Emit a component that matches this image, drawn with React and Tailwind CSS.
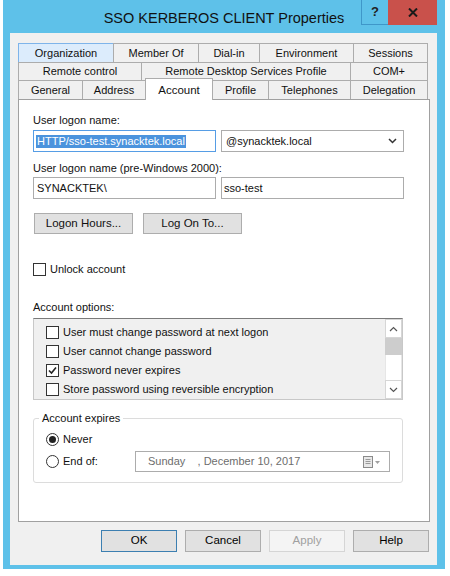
import React from "react";

const rows = [
  [
    { label: "Organization", w: "w-[95px]", hover: true },
    { label: "Member Of", w: "w-[85px]" },
    { label: "Dial-in", w: "w-[61px]" },
    { label: "Environment", w: "w-[94px]" },
    { label: "Sessions", w: "w-[75px]" },
  ],
  [
    { label: "Remote control", w: "w-[123px]" },
    { label: "Remote Desktop Services Profile", w: "w-[209px]" },
    { label: "COM+", w: "w-[78px]" },
  ],
];

const bottomRow = [
  { label: "General", w: "w-[64px]" },
  { label: "Address", w: "w-[63px]" },
  { label: "Account", w: "w-[68px]", active: true },
  { label: "Profile", w: "w-[55px]" },
  { label: "Telephones", w: "w-[82px]" },
  { label: "Delegation", w: "w-[78px]" },
];

const options = [
  { label: "User must change password at next logon", checked: false },
  { label: "User cannot change password", checked: false },
  { label: "Password never expires", checked: true },
  { label: "Store password using reversible encryption", checked: false },
];

const Check = ({ checked }) => (
  <span className="w-[13px] h-[13px] border border-[#333] bg-white flex items-center justify-center shrink-0">
    {checked && (
      <svg width="9" height="9" viewBox="0 0 9 9">
        <path d="M1 4.5 L3.5 7 L8 1.5" fill="none" stroke="#222" strokeWidth="1.6" />
      </svg>
    )}
  </span>
);

const Radio = ({ on }) => (
  <span className="w-[13px] h-[13px] rounded-full border border-[#333] bg-white flex items-center justify-center shrink-0">
    {on && <span className="w-[7px] h-[7px] rounded-full bg-[#222]" />}
  </span>
);

const Tab = ({ label, w, hover, last }) => (
  <div
    className={`${w} h-full flex items-center justify-center border-t border-l ${
      last ? "border-r" : ""
    } ${
      hover
        ? "bg-[#dcecfc] border-[#7eb4ea]"
        : "bg-[#f0f0f0] border-[#acacac]"
    }`}
  >
    {label}
  </div>
);

const Button = ({ children, w, kind }) => {
  const styles =
    kind === "default"
      ? "border-[#3c7fb1] bg-[#e1e1e1] text-black"
      : kind === "disabled"
        ? "border-[#d5d5d5] bg-[#f4f4f4] text-[#a0a0a0]"
        : "border-[#adadad] bg-[#e1e1e1] text-black";
  return (
    <button
      type="button"
      className={`${w} h-[22px] border ${styles} flex items-center justify-center text-[11.5px]`}
    >
      {children}
    </button>
  );
};

export default function App() {
  return (
    <div className="w-[450px] h-[576px] bg-white font-['Liberation_Sans',Arial,sans-serif] text-[11px] text-[#111] overflow-hidden">
      <div className="ml-[3px] w-[442px] h-[569px] bg-[#5ec1e9] flex flex-col">
        {/* title bar */}
        <div className="h-[33px] grid grid-cols-[1fr_auto_1fr] shrink-0">
          <div />
          <div className="pt-[9px] text-[14.5px] leading-[18px] text-[#111] whitespace-nowrap">
            SSO KERBEROS CLIENT Properties
          </div>
          <div className="flex justify-end items-start mr-[8px]">
            <div className="w-[27px] h-[25px] border-l border-b border-[#3f97c9] flex items-center justify-center text-[13px] font-bold text-[#222]">
              ?
            </div>
            <div className="w-[49px] h-[25px] bg-[#c9514b] flex items-center justify-center">
              <svg width="10" height="9" viewBox="0 0 10 9">
                <path d="M1 0.5 L9 8.5 M9 0.5 L1 8.5" stroke="#1a1a1a" strokeWidth="2" />
              </svg>
            </div>
          </div>
        </div>

        {/* client area */}
        <div className="ml-[7px] w-[427px] h-[532px] bg-[#f0f0f0] flex flex-col pt-[10px] pl-[8px]">
          {/* tabs */}
          <div className="flex h-[19px]">
            {rows[0].map((t, i) => (
              <Tab key={t.label} {...t} last={i === rows[0].length - 1} />
            ))}
          </div>
          <div className="flex h-[18px]">
            {rows[1].map((t, i) => (
              <Tab key={t.label} {...t} last={i === rows[1].length - 1} />
            ))}
          </div>
          <div className="flex h-[19px] items-start">
            {bottomRow.map((t, i) =>
              t.active ? (
                <div
                  key={t.label}
                  className={`${t.w} relative z-10 -mt-[2px] h-[22px] bg-white border-t border-l border-r border-[#acacac] flex items-start justify-center pt-[3px] text-[11.5px]`}
                >
                  {t.label}
                </div>
              ) : (
                <div
                  key={t.label}
                  className={`${t.w} h-full flex items-center justify-center bg-[#f0f0f0] border-t border-[#acacac] ${
                    i === 3 ? "" : "border-l"
                  } ${i === bottomRow.length - 1 ? "border-r" : ""}`}
                >
                  {t.label}
                </div>
              )
            )}
          </div>

          {/* panel */}
          <div className="w-[412px] h-[423px] bg-white border border-[#a0a0a0] flex flex-col pl-[14px] text-[11px]">
            <div className="mt-[13px] h-[14px] leading-[14px]">User logon name:</div>
            <div className="mt-[3px] flex gap-[5px]">
              <div className="w-[183px] h-[22px] border border-[#569de5] flex items-center pl-[2px]">
                <span className="bg-[#4b93dd] text-white leading-[13px] px-[1px]">
                  HTTP/sso-test.synacktek.local
                </span>
              </div>
              <div className="w-[183px] h-[22px] border border-[#acacac] flex items-center justify-between pl-[4px] pr-[6px]">
                <span>@synacktek.local</span>
                <svg width="9" height="6" viewBox="0 0 9 6">
                  <path d="M1 1 L4.5 4.5 L8 1" fill="none" stroke="#333" strokeWidth="1.5" />
                </svg>
              </div>
            </div>
            <div className="mt-[9px] h-[14px] leading-[14px]">
              User logon name (pre-Windows 2000):
            </div>
            <div className="mt-[2px] flex gap-[5px]">
              <div className="w-[183px] h-[22px] border border-[#acacac] flex items-center pl-[3px]">
                SYNACKTEK\
              </div>
              <div className="w-[183px] h-[22px] border border-[#acacac] flex items-center pl-[2px]">
                sso-test
              </div>
            </div>
            <div className="mt-[14px] flex gap-[10px] pl-[1px]">
              <button
                type="button"
                className="w-[99px] h-[21px] border border-[#adadad] bg-[#e1e1e1] text-[11.5px]"
              >
                Logon Hours...
              </button>
              <button
                type="button"
                className="w-[99px] h-[21px] border border-[#adadad] bg-[#e1e1e1] text-[11.5px]"
              >
                Log On To...
              </button>
            </div>
            <div className="mt-[28px] h-[14px] flex items-center gap-[4px]">
              <Check />
              <span>Unlock account</span>
            </div>

            <div className="mt-[24px] h-[14px] leading-[14px]">Account options:</div>
            <div className="mt-[4px] w-[370px] h-[82px] border border-[#c8c8c8] border-t-[#7a7a7a] bg-[#f0f0f0] flex">
              <div className="flex-1 pt-[4px] pl-[12px]">
                {options.map((o) => (
                  <div key={o.label} className="h-[19px] flex items-center gap-[4px]">
                    <Check checked={o.checked} />
                    <span>{o.label}</span>
                  </div>
                ))}
              </div>
              <div className="w-[17px] h-full flex flex-col bg-white">
                <div className="h-[19px] border border-[#d6d6d6] flex items-center justify-center">
                  <svg width="9" height="6" viewBox="0 0 9 6">
                    <path d="M1 5 L4.5 1.5 L8 5" fill="none" stroke="#555" strokeWidth="1.2" />
                  </svg>
                </div>
                <div className="h-[17px] bg-[#cdcdcd]" />
                <div className="flex-1 border-x border-[#e6e6e6]" />
                <div className="h-[19px] border border-[#d6d6d6] flex items-center justify-center">
                  <svg width="9" height="6" viewBox="0 0 9 6">
                    <path d="M1 1 L4.5 4.5 L8 1" fill="none" stroke="#555" strokeWidth="1.2" />
                  </svg>
                </div>
              </div>
            </div>

            <fieldset className="mt-[11px] w-[370px] border border-[#dcdcdc] rounded-[3px] pb-[10px]">
              <legend className="ml-[5px] px-[3px] leading-[14px]">Account expires</legend>
              <div className="mt-[7px] h-[14px] pl-[12px] flex items-center gap-[4px]">
                <Radio on />
                <span>Never</span>
              </div>
              <div className="mt-[5px] h-[21px] pl-[12px] flex items-center">
                <Radio />
                <span className="ml-[4px] w-[72px]">End of:</span>
                <div className="w-[255px] h-[21px] border border-[#acacac] flex items-center justify-between pl-[12px] pr-[8px] text-[#6d6d6d]">
                  <span className="whitespace-pre">Sunday    , December 10, 2017</span>
                  <svg width="18" height="12" viewBox="0 0 18 12">
                    <rect x="0.5" y="0.5" width="9" height="11" fill="#e8e8e8" stroke="#8a8a8a" />
                    <path d="M2.5 3.5 H7.5 M2.5 5.5 H7.5 M2.5 7.5 H7.5" stroke="#9a9a9a" />
                    <path d="M12 5 L17 5 L14.5 8 Z" fill="#a0a0a0" />
                  </svg>
                </div>
              </div>
            </fieldset>
          </div>

          {/* dialog buttons */}
          <div className="mt-[8px] pr-[8px] flex justify-end gap-[8px]">
            <Button w="w-[76px]" kind="default">OK</Button>
            <Button w="w-[76px]">Cancel</Button>
            <Button w="w-[76px]" kind="disabled">Apply</Button>
            <Button w="w-[76px]">Help</Button>
          </div>
        </div>
      </div>
    </div>
  );
}
